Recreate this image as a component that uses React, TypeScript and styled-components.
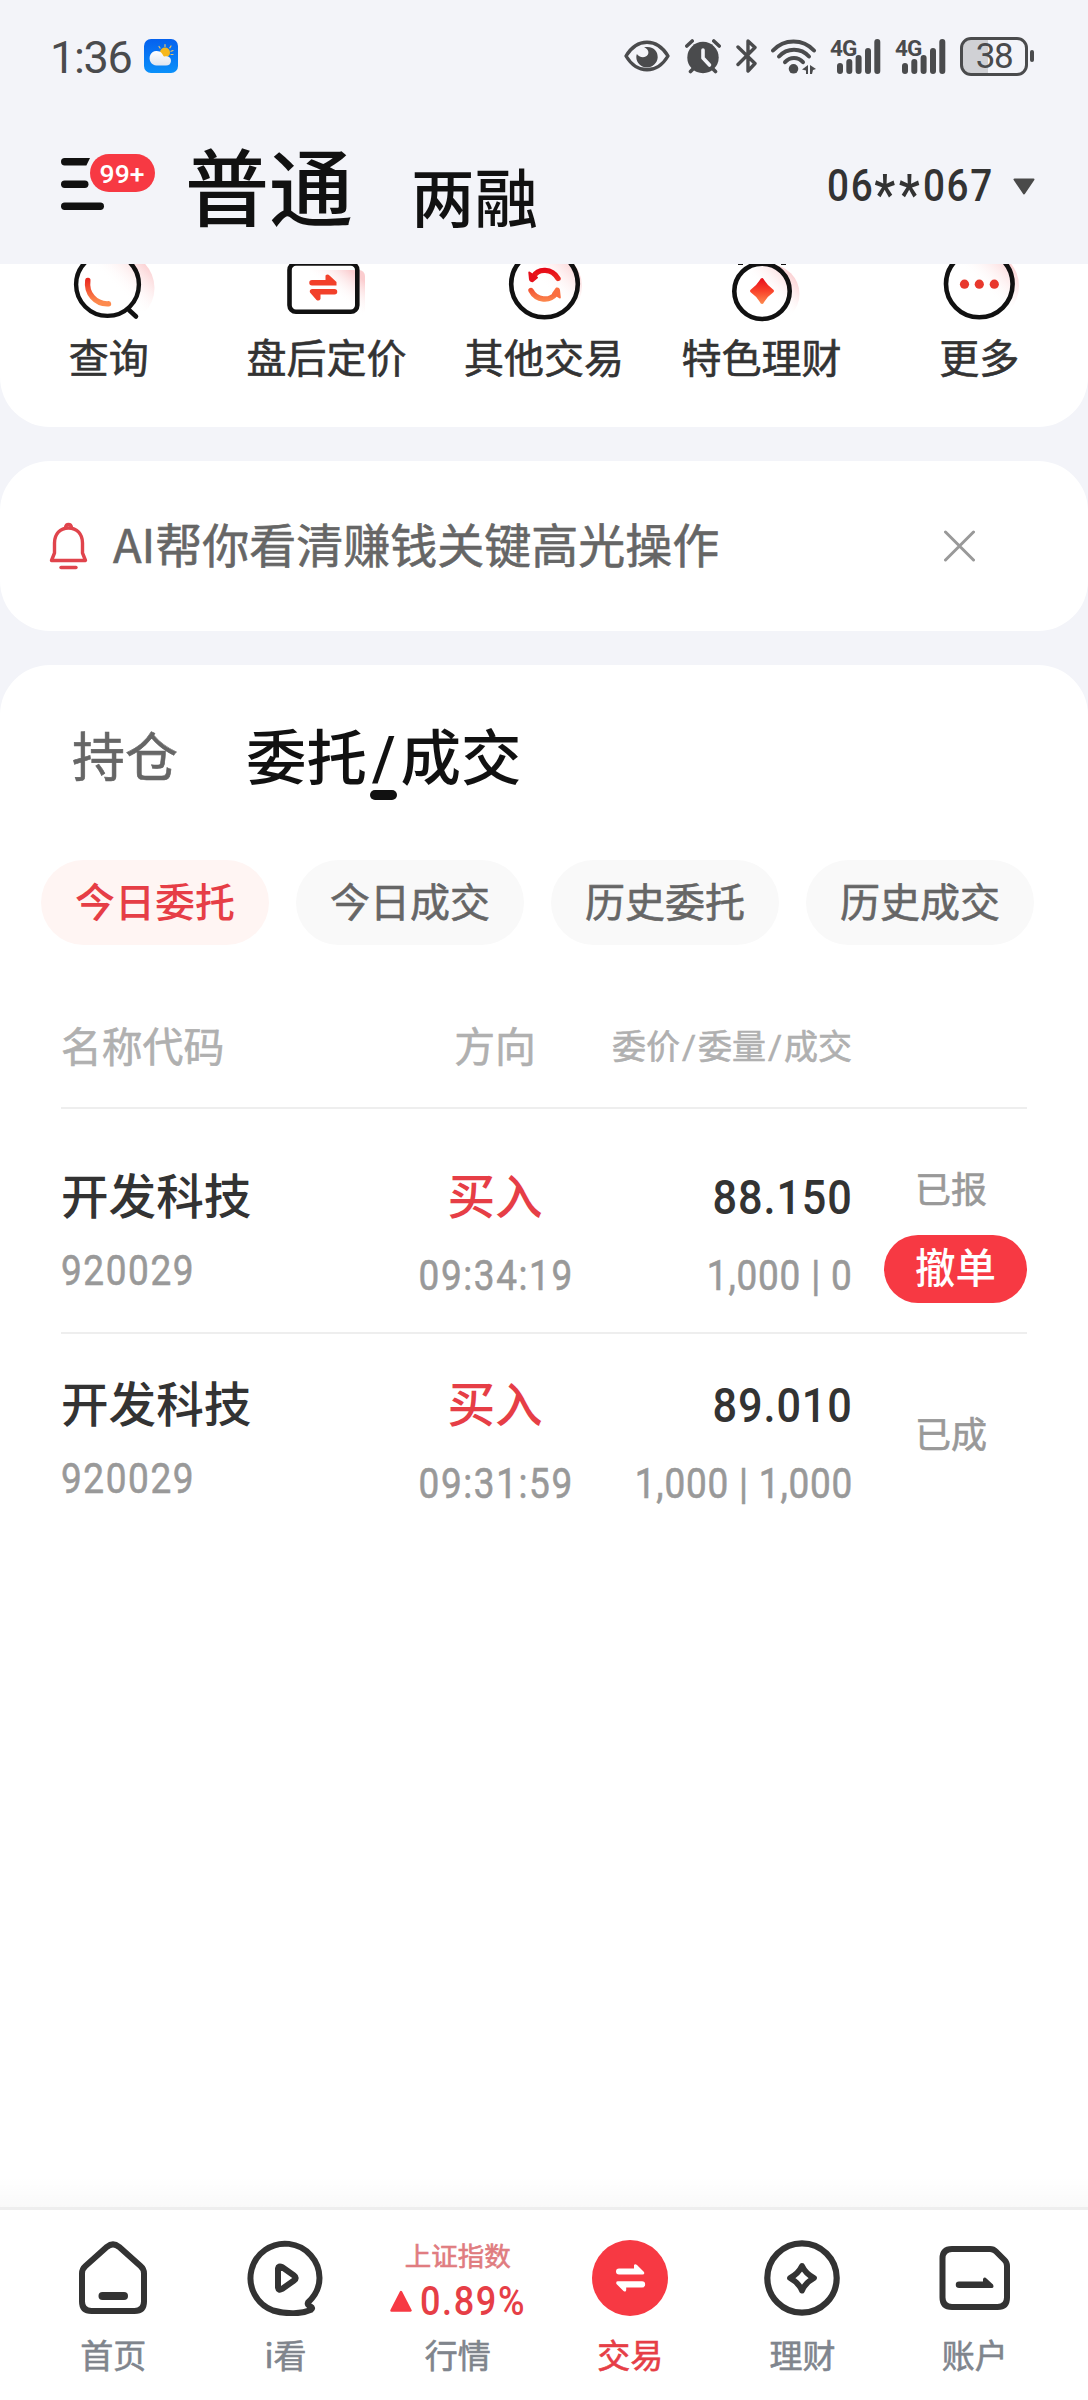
import React from 'react';
import styled, { createGlobalStyle, css } from 'styled-components';

const CJK = `"Noto Sans CJK SC", "Noto Sans", sans-serif`;
const NUM = `Roboto, "Noto Sans CJK SC", sans-serif`;
const RED = '#f73943';
const RED_TEXT = '#e63e46';

const GlobalStyle = createGlobalStyle`
  *, *::before, *::after { box-sizing: border-box; }
  body { margin: 0; background: #f3f4f9; font-family: ${CJK}; }
  svg { display: block; flex: none; }
`;

const Screen = styled.div`
  width: 1088px;
  height: 2400px;
  display: flex;
  flex-direction: column;
  background: #f3f4f9;
  overflow: hidden;
`;

/* slightly sturdier strokes for regular-weight text */
const sturdy = css`
  -webkit-text-stroke: 0.6px currentColor;
`;

/* condensed numerals */
const Condensed = styled.span<{ $origin?: string; $scale?: number; $space?: number }>`
  display: inline-block;
  transform: scaleX(${(p) => p.$scale ?? 0.88});
  transform-origin: ${(p) => p.$origin ?? 'left'} center;
  letter-spacing: ${(p) => p.$space ?? 1.8}px;
  margin-right: -${(p) => p.$space ?? 1.8}px;
`;

/* ---------- status bar ---------- */
const StatusBar = styled.div`
  height: 112px;
  padding: 0 54px 0 50px;
  display: flex;
  align-items: center;
  justify-content: space-between;
  color: #4a4b4d;
`;
const StatusLeft = styled.div`
  display: flex;
  align-items: center;
  gap: 13px;
`;
const Clock = styled.span`
  width: 81px;
  font: 400 45px/50px ${NUM};
  letter-spacing: -1.3px;
  white-space: nowrap;
  margin-top: 3px;
`;
const StatusIcons = styled.div`
  display: flex;
  align-items: center;
`;
const IconSlot = styled.div<{ $gap: number }>`
  margin-left: ${(p) => p.$gap}px;
`;
const Cell = styled.div`
  width: 51px;
  height: 35px;
  display: flex;
  align-items: flex-end;
`;
const CellTag = styled.span`
  font: 700 22.5px/18px ${NUM};
  letter-spacing: -1px;
  width: 25px;
  align-self: flex-start;
`;
const BarsSlot = styled.div`
  margin-left: -18px;
`;
const Battery = styled.div`
  width: 68px;
  height: 39px;
  border: 3px solid #4a4b4d;
  border-radius: 11px;
  display: flex;
  align-items: center;
  justify-content: center;
  background: linear-gradient(90deg, #d0d1d5 0 25px, transparent 25px);
  font: 400 35px/35px ${NUM};
  letter-spacing: -1.5px;
`;
const BatteryWrap = styled.div`
  display: flex;
  align-items: center;
  gap: 2px;
`;
const BatteryNub = styled.div`
  width: 4px;
  height: 12px;
  border-radius: 2px;
  background: #4a4b4d;
`;

/* ---------- header ---------- */
const Header = styled.header`
  height: 152px;
  padding: 0 53px 0 61px;
  display: flex;
  align-items: flex-start;
`;
const MenuButton = styled.div`
  position: relative;
  width: 94px;
  height: 60px;
  margin-top: 40px;
`;
const Badge = styled.span`
  position: absolute;
  left: 28.5px;
  top: 2px;
  width: 65px;
  height: 38px;
  border-radius: 19px;
  background: ${RED};
  color: #fff;
  font: 500 26.5px/39px ${NUM};
  text-align: center;
`;
const Account = styled.h1<{ $active?: boolean }>`
  margin: 0;
  color: #111;
  font-weight: 500;
  white-space: nowrap;
  ${(p) =>
    p.$active
      ? css`
          font-size: 84px;
          line-height: 90px;
          margin: 27px 0 0 30px;
        `
      : css`
          font-size: 63.5px;
          line-height: 70px;
          margin: 47px 0 0 58px;
        `}
`;
const AccountNo = styled.div`
  margin: 49px 0 0 auto;
  display: flex;
  align-items: center;
  gap: 21px;
  color: #333;
  font: 500 45px/50px ${NUM};
`;
const Stars = styled.span`
  font-size: 55px;
  line-height: 1px;
  vertical-align: -13px;
  letter-spacing: 4px;
`;

/* ---------- quick actions ---------- */
const Quick = styled.section`
  height: 163px;
  background: #fff;
  border-radius: 0 0 50px 50px;
  display: grid;
  grid-template-columns: repeat(5, 1fr);
  justify-items: center;
  align-items: start;
`;
const QuickItem = styled.div`
  display: flex;
  flex-direction: column;
  align-items: center;
  gap: 9px;
  color: #333;
  font: 400 40px/50px ${CJK};
  ${sturdy}
`;

/* ---------- notice ---------- */
const Notice = styled.section`
  height: 170px;
  margin-top: 34px;
  padding: 0 113px 0 49px;
  display: flex;
  align-items: center;
  background: #fff;
  border-radius: 50px;
`;
const NoticeText = styled.p`
  margin: -6px auto 0 25px;
  color: #666;
  font: 400 47px/60px ${CJK};
  ${sturdy}
`;

/* ---------- orders ---------- */
const Orders = styled.main`
  flex: 1;
  min-height: 0;
  margin-top: 34px;
  padding: 53px 54px 0 41px;
  background: #fff;
  border-radius: 50px 50px 0 0;
  display: flex;
  flex-direction: column;
`;
const Tabs = styled.nav`
  height: 82px;
  padding-left: 31px;
  display: flex;
  align-items: flex-start;
`;
const Tab = styled.div<{ $active?: boolean }>`
  display: flex;
  flex-direction: column;
  align-items: center;
  ${(p) =>
    p.$active
      ? css`
          margin-left: 68px;
          color: #111;
          font: 500 60.5px/72px ${CJK};
          &::after {
            content: '';
            width: 27px;
            height: 10px;
            border-radius: 5px;
            background: #111;
          }
        `
      : css`
          color: #666;
          font: 400 53px/72px ${CJK};
          ${sturdy}
        `}
`;
const Slash = styled.span<{ $x: number }>`
  margin: 0 ${(p) => p.$x}px;
  font-family: ${NUM};
  line-height: 1px;
`;
const Chips = styled.div`
  margin-top: 60px;
  display: grid;
  grid-template-columns: repeat(4, 228px);
  column-gap: 27px;
`;
const Chip = styled.div<{ $active?: boolean }>`
  height: 85px;
  border-radius: 43px;
  text-align: center;
  font: ${(p) => (p.$active ? 500 : 400)} 40px/80px ${CJK};
  color: ${(p) => (p.$active ? RED_TEXT : '#666')};
  background: ${(p) => (p.$active ? '#fff5f3' : '#f9f9f9')};
  ${(p) => !p.$active && sturdy}
`;
const Table = styled.div`
  margin: 62px 7px 0 20px;
`;
const rowGrid = css`
  display: grid;
  grid-template-columns: 341px 186px 264px 175px;
`;
const HeadRow = styled.div`
  ${rowGrid}
  height: 102px;
  border-bottom: 2px solid #eee;
  color: #b0b0b0;
  font: 400 40.8px/76px ${CJK};
  ${sturdy}
`;
const HeadCell = styled.div<{ $align?: string; $small?: boolean }>`
  text-align: ${(p) => p.$align ?? 'left'};
  white-space: nowrap;
  ${(p) => p.$small && css`font-size: 34px;`}
`;
const Row = styled.div<{ $first?: boolean }>`
  ${rowGrid}
  height: ${(p) => (p.$first ? 225 : 208)}px;
  padding-top: ${(p) => (p.$first ? 54 : 37)}px;
  border-bottom: ${(p) => (p.$first ? '2px solid #eee' : 'none')};
`;
const Col = styled.div<{ $align: string }>`
  display: flex;
  flex-direction: column;
  align-items: ${(p) => p.$align};
  white-space: nowrap;
`;
const Name = styled.div<{ $buy?: boolean }>`
  color: ${(p) => (p.$buy ? RED_TEXT : '#333')};
  font: 500 47.6px/62px ${CJK};
`;
const Sub = styled.div<{ $top: number }>`
  margin-top: ${(p) => p.$top}px;
  color: #999;
  font: 400 42px/50px ${NUM};
  ${sturdy}
`;
const Price = styled.div`
  color: #333;
  font: 500 48px/60px ${NUM};
  margin-top: 5px;
`;
const StatusCol = styled.div<{ $top: number }>`
  display: flex;
  flex-direction: column;
  align-items: flex-end;
  padding-top: ${(p) => p.$top}px;
`;
const Status = styled.div`
  color: #999;
  font: 400 36px/44px ${CJK};
  margin-right: 40px;
  ${sturdy}
`;
const CancelButton = styled.button`
  width: 143px;
  height: 68px;
  margin-top: 26px;
  padding: 1px 0 0;
  border: 0;
  border-radius: 34px;
  background: ${RED};
  color: #fff;
  font: 500 40.5px/60px ${CJK};
  display: flex;
  align-items: flex-start;
  justify-content: center;
`;

/* ---------- tab bar ---------- */
const TabShade = styled.div`
  height: 30px;
  flex: none;
  margin-top: -30px;
  background: linear-gradient(rgba(0, 0, 0, 0), rgba(0, 0, 0, 0.024));
`;
const TabBar = styled.footer`
  flex: none;
  height: 193px;
  padding: 30px 27px 0;
  border-top: 3px solid #eee;
  background: #fff;
  display: grid;
  grid-template-columns: repeat(6, 1fr);
`;
const TabItem = styled.div<{ $active?: boolean }>`
  display: flex;
  flex-direction: column;
  align-items: center;
  color: ${(p) => (p.$active ? RED_TEXT : '#80858d')};
  font: 400 33px/44px ${CJK};
  ${sturdy}
`;
const TabGlyph = styled.div`
  height: 76px;
  margin-bottom: 16px;
  display: flex;
  flex-direction: column;
  align-items: center;
`;
const IndexName = styled.div`
  color: #e07c80;
  font: 400 26.5px/26px ${CJK};
  margin-top: 2px;
`;
const IndexValue = styled.div`
  display: flex;
  align-items: center;
  gap: 8px;
  width: 136px;
  margin-top: 8px;
  color: ${RED_TEXT};
  font: 500 41px/50px ${NUM};
  -webkit-text-stroke: 0;
`;

const bar = '#4a4b4d';

const WeatherIcon = () => (
  <svg width="34" height="34" viewBox="0 0 34 34">
    <defs>
      <linearGradient id="sky" x1="0" y1="0" x2="0" y2="1">
        <stop offset="0" stopColor="#0561ee" />
        <stop offset="1" stopColor="#0a90fa" />
      </linearGradient>
      <linearGradient id="cloud" x1="0" y1="0" x2="0" y2="1">
        <stop offset="0" stopColor="#ffffff" />
        <stop offset="1" stopColor="#dfe5f0" />
      </linearGradient>
    </defs>
    <rect width="34" height="34" rx="7" fill="url(#sky)" />
    <g stroke="#e9c46a" strokeWidth="1.2" strokeLinecap="round">
      <path d="M21 5.5v2M15 7.5l1 1.5M27 7l-1.2 1.8M29 11.5l-2 .8M29 15.500h-2" />
    </g>
    <circle cx="21" cy="13.5" r="5" fill="#f6b81c" />
    <path d="M12.500 26.500A7 7.300 0 1 1 18.300 15Q19.500 17 20 17.500Q26.800 16.500 27 22Q26.500 26.500 22 26.500z" fill="url(#cloud)" />
  </svg>
);
const EyeIcon = () => (
  <svg width="46" height="32" viewBox="0 0 46 32">
    <path d="M2 16C8 6 15 2.200 23 2.200S38 6 44 16C38 26 31 29.800 23 29.800S8 26 2 16z" fill="none" stroke={bar} strokeWidth="3.400" strokeLinejoin="round" />
    <path d="M20 7.300C30 5.500 34 12 33.700 17.500 33.300 23 28.500 27.500 23 27.500S12.300 23 12.300 17c0-1 .2-2 .6-3 2 3.500 8.500 4.600 11 .6 1.600-2.800-.6-6.300-3.900-7.300z" fill={bar} />
  </svg>
);
const AlarmIcon = () => (
  <svg width="36" height="35" viewBox="0 0 36 35">
    <circle cx="18" cy="18.500" r="15.700" fill={bar} />
    <path d="M1.800 7L7.200 2M34.200 7L28.800 2M5.500 32.500l4-4M30.500 32.500l-4-4" stroke={bar} strokeWidth="3.600" strokeLinecap="round" />
    <path d="M18 11v8l6.500 7" fill="none" stroke="#f3f4f9" strokeWidth="3.600" strokeLinecap="round" strokeLinejoin="round" />
  </svg>
);
const BluetoothIcon = () => (
  <svg width="21" height="36" viewBox="0 0 21 36">
    <path d="M2 9l17 16.500-7 7.500V3l7 6.500L2 26.500" fill="none" stroke={bar} strokeWidth="3.400" strokeLinecap="round" strokeLinejoin="round" />
  </svg>
);
const WifiIcon = () => (
  <svg width="46" height="35" viewBox="0 0 46 35">
    <g fill="none" stroke={bar} strokeWidth="4" strokeLinecap="round">
      <path d="M2 11.500C13-.6 32-.6 43 11.500" />
      <path d="M8 17.500c8-9 22-9 30 0" />
      <path d="M14 23.200c5-5.500 13-5.500 18 0" />
    </g>
    <circle cx="22.500" cy="29.800" r="4.800" fill={bar} />
    <path d="M37 26v9h-2v-3.500l-4-1zM39 26l6 4-3 1-1 4h-2z" fill={bar} />
  </svg>
);
const Bars = () => (
  <svg width="44" height="35" viewBox="0 0 44 35">
    <g fill={bar}>
      <rect x="0" y="24" width="6" height="11" rx="3" />
      <rect x="9.300" y="20" width="6" height="15" rx="3" />
      <rect x="18.600" y="16" width="6" height="19" rx="3" />
      <rect x="28" y="9" width="6" height="26" rx="3" />
      <rect x="37.300" y="0" width="6" height="35" rx="3" />
    </g>
  </svg>
);
const Signal = () => (
  <Cell>
    <CellTag>4G</CellTag>
    <BarsSlot><Bars /></BarsSlot>
  </Cell>
);
const MenuIcon = () => (
  <svg width="94" height="60" viewBox="0 0 94 60">
    <g fill="#111">
      <path d="M3.700 6H29l-3.600 7.400H3.700a3.700 3.700 0 0 1 0-7.400z" />
      <rect x="0" y="28.600" width="27.500" height="7.400" rx="3.700" />
      <rect x="0" y="50.600" width="43" height="7.400" rx="3.700" />
    </g>
  </svg>
);
const CaretDown = () => (
  <svg width="22" height="17" viewBox="0 0 22 17">
    <path d="M1.500 1.500h19L11 15.500z" fill="#4a4a4a" stroke="#4a4a4a" strokeWidth="2" strokeLinejoin="round" />
  </svg>
);

const QuickDefs = () => (
  <svg width="0" height="0">
    <defs>
      <linearGradient id="flame" x1="0" y1="0" x2="0" y2="1">
        <stop offset="0" stopColor="#e60e1c" />
        <stop offset="0.500" stopColor="#f9422a" />
        <stop offset="1" stopColor="#fd8a4e" />
      </linearGradient>
      <linearGradient id="flameV" gradientUnits="userSpaceOnUse" x1="50" y1="3" x2="50" y2="38">
        <stop offset="0" stopColor="#e60014" />
        <stop offset="0.350" stopColor="#ea2a20" />
        <stop offset="1" stopColor="#fd8a4e" />
      </linearGradient>
      <linearGradient id="blush" x1="1" y1="0.250" x2="0.600" y2="0.650">
        <stop offset="0" stopColor="#fbcdcf" />
        <stop offset="1" stopColor="#fff" stopOpacity="0" />
      </linearGradient>
    </defs>
  </svg>
);
const Glyph: React.FC<{ children: React.ReactNode }> = ({ children }) => (
  <svg width="100" height="58" viewBox="0 0 100 58">{children}</svg>
);
const QueryIcon = () => (
  <Glyph>
    <circle cx="60" cy="24" r="35.500" fill="url(#blush)" />
    <circle cx="48.500" cy="20.500" r="31.400" fill="none" stroke="#111" strokeWidth="4.400" />
    <path d="M70 46l7 6.500" stroke="#111" strokeWidth="4.600" strokeLinecap="round" />
    <path d="M28.800 16.500C27 29 36 40.500 49.500 39.800" fill="none" stroke="url(#flameV)" strokeWidth="5.400" strokeLinecap="round" />
  </Glyph>
);
const FixedPriceIcon = () => (
  <Glyph>
    <rect x="30" y="6" width="59" height="46" rx="6" fill="url(#blush)" />
    <rect x="13.500" y="-.5" width="67.800" height="48.300" rx="6.500" fill="none" stroke="#111" strokeWidth="4.600" />
    <path d="M36 16h13.500v-4.500q2-2 4 0l7 6.500v3.500H36a2.700 2.700 0 0 1 0-5.500zM58.500 25H36q-3 .5-2 3.500l6.500 7.500q2.500 1.500 4-1v-4.500h14a2.700 2.700 0 0 0 0-5.500z" fill="#f2402a" />
  </Glyph>
);
const OtherTradeIcon = () => (
  <Glyph>
    <circle cx="54" cy="22" r="34" fill="url(#blush)" />
    <circle cx="50.500" cy="20" r="33.300" fill="none" stroke="#111" strokeWidth="4.600" />
    <g fill="none" stroke="url(#flameV)" strokeWidth="5.400" strokeLinecap="round">
      <path d="M39.500 12.500C44 4 58 4 64 14.500" />
      <path d="M37 26.500C42.500 37 56 37.500 62 29.500" />
    </g>
    <path d="M35.300 8.500L43 13.500 38.500 17.300q-2 0-2.500-2z" fill="#e6101c" stroke="#e6101c" strokeWidth="2" strokeLinejoin="round" />
    <path d="M65.800 33.500L59 29.500 62.500 24.500q2-.5 2.500 1.500z" fill="#fb6f40" stroke="#fb6f40" strokeWidth="2" strokeLinejoin="round" />
  </Glyph>
);
const WealthIcon = () => (
  <Glyph>
    <path d="M26 0h5M69 0h5" stroke="#111" strokeWidth="2" />
    <circle cx="58" cy="30" r="29.500" fill="url(#blush)" />
    <circle cx="50" cy="27.300" r="27.700" fill="none" stroke="#111" strokeWidth="4.600" />
    <path d="M50 14q1.500 0 2.500 2.500 3.500 5.500 8 8.500 3 2 0 4-4.500 3-8 8.500Q50 42.500 47.500 37.500 44 32 39.500 29q-3-2 0-4 4.500-3 8-8.500Q48.500 14 50 14z" fill="url(#flame)" />
  </Glyph>
);
const MoreIcon = () => (
  <Glyph>
    <circle cx="55" cy="22" r="35" fill="url(#blush)" />
    <circle cx="50.300" cy="20" r="33.300" fill="none" stroke="#111" strokeWidth="4.600" />
    <g fill="#e8382d">
      <circle cx="35.500" cy="20.200" r="4.600" />
      <circle cx="50.300" cy="20.200" r="4.600" />
      <circle cx="65.300" cy="20.200" r="4.600" />
    </g>
  </Glyph>
);

const BellIcon = () => (
  <svg width="39" height="48" viewBox="0 0 39 48">
    <g fill="none" stroke="#e0444c" strokeWidth="3.400" strokeLinecap="round" strokeLinejoin="round">
      <path d="M5.500 31V21C5.500 12 11 6 19.500 6S33.500 12 33.500 21V31L36.500 38.500H2.500z" />
      <path d="M16.500 5.500Q17 2.500 19.500 2.500T22.500 5.500" />
      <path d="M12 45.500h15" />
    </g>
  </svg>
);
const CloseIcon = () => (
  <svg width="31" height="32" viewBox="0 0 31 32">
    <path d="M1.500 2l28 28M29.500 2l-28 28" stroke="#999" strokeWidth="3" strokeLinecap="round" />
  </svg>
);

const ink = '#333';
const HomeIcon = () => (
  <svg width="76" height="76" viewBox="0 0 76 76">
    <path d="M7 33.500Q7 29 10.500 26L32 6.800Q38 2 44 6.800L65.500 26Q69 29 69 33.500V61.500Q69 71 59.500 71H16.500Q7 71 7 61.500z" fill="none" stroke={ink} strokeWidth="6" strokeLinejoin="round" />
    <path d="M27.500 56h21.500" stroke={ink} strokeWidth="8" strokeLinecap="round" />
  </svg>
);
const WatchIcon = () => (
  <svg width="76" height="76" viewBox="0 0 76 76">
    <path d="M61 62.500C68 56 72.500 48 72.500 38A34.500 34.500 0 1 0 26 70.500C40 74.500 55 74 64 69.800Q66.500 68 63.500 66.500Q60 65 61 62.500z" fill="none" stroke={ink} strokeWidth="6" strokeLinejoin="round" />
    <path d="M31 28.500Q31.500 25.500 35 27L47 35.500Q50.500 38 47 40.500L35 49Q31.500 51 31 47.500z" fill="none" stroke={ink} strokeWidth="6" strokeLinejoin="round" />
  </svg>
);
const TradeIcon = () => (
  <svg width="76" height="76" viewBox="0 0 76 76">
    <circle cx="38" cy="38" r="38" fill={RED} />
    <path d="M27 28.500H42V25Q43 23.500 45 25L52 32Q53 34.500 50.500 34.500H27A3 3 0 0 1 27 28.500zM50 41.200H26Q23.500 41.200 24.500 44L31.500 51Q34 52.500 34.200 50V47.500H50A3 3 0 0 0 50 41.200z" fill="#fff" />
  </svg>
);
const FinanceIcon = () => (
  <svg width="76" height="76" viewBox="0 0 76 76">
    <circle cx="38" cy="38" r="34.700" fill="none" stroke={ink} strokeWidth="6.200" />
    <path d="M38 26Q41.500 33.500 50 38Q41.500 42.500 38 50.500Q34.500 42.500 26 38Q34.500 33.500 38 26z" fill="none" stroke={ink} strokeWidth="5.800" strokeLinejoin="round" />
  </svg>
);
const AccountIcon = () => (
  <svg width="76" height="76" viewBox="0 0 76 76">
    <path d="M15 9H53Q56.500 9 59 11.500L67.500 20Q70 22.500 70 26V57.500Q70 67 60.500 67H15Q5.500 67 5.500 57.500V18.500Q5.500 9 15 9z" fill="none" stroke={ink} strokeWidth="6" strokeLinejoin="round" />
    <path d="M22 41.500H46V39Q47.500 36.500 49.500 38.500L56 44.500Q57.500 48 54.500 48H22A3.200 3.200 0 0 1 22 41.500z" fill={ink} />
  </svg>
);
const UpTriangle = () => (
  <svg width="22" height="22" viewBox="0 0 22 22">
    <path d="M11 2L20.500 20.500h-19z" fill={RED} stroke={RED} strokeWidth="2.500" strokeLinejoin="round" />
  </svg>
);

const quick = [
  { label: '查询', icon: <QueryIcon /> },
  { label: '盘后定价', icon: <FixedPriceIcon /> },
  { label: '其他交易', icon: <OtherTradeIcon /> },
  { label: '特色理财', icon: <WealthIcon /> },
  { label: '更多', icon: <MoreIcon /> },
];
const chips = ['今日委托', '今日成交', '历史委托', '历史成交'];
const orders = [
  { time: '09:34:19', price: '88.150', qty: '1,000 | 0', status: '已报', open: true },
  { time: '09:31:59', price: '89.010', qty: '1,000 | 1,000', status: '已成', open: false },
];

export default function App() {
  return (
    <Screen>
      <GlobalStyle />
      <QuickDefs />
      <StatusBar>
        <StatusLeft>
          <Clock>1:36</Clock>
          <WeatherIcon />
        </StatusLeft>
        <StatusIcons>
          <EyeIcon />
          <IconSlot $gap={15}><AlarmIcon /></IconSlot>
          <IconSlot $gap={15}><BluetoothIcon /></IconSlot>
          <IconSlot $gap={14}><WifiIcon /></IconSlot>
          <IconSlot $gap={13}><Signal /></IconSlot>
          <IconSlot $gap={14}><Signal /></IconSlot>
          <IconSlot $gap={14}>
            <BatteryWrap>
              <Battery>38</Battery>
              <BatteryNub />
            </BatteryWrap>
          </IconSlot>
        </StatusIcons>
      </StatusBar>

      <Header>
        <MenuButton>
          <MenuIcon />
          <Badge>99+</Badge>
        </MenuButton>
        <Account $active>普通</Account>
        <Account>两融</Account>
        <AccountNo>
          <Condensed $origin="right" $scale={0.86} $space={1.8}>
            06<Stars>**</Stars>067
          </Condensed>
          <CaretDown />
        </AccountNo>
      </Header>

      <Quick>
        {quick.map((q) => (
          <QuickItem key={q.label}>
            {q.icon}
            {q.label}
          </QuickItem>
        ))}
      </Quick>

      <Notice>
        <BellIcon />
        <NoticeText>AI帮你看清赚钱关键高光操作</NoticeText>
        <CloseIcon />
      </Notice>

      <Orders>
        <Tabs>
          <Tab>持仓</Tab>
          <Tab $active>
            <span>委托<Slash $x={5}>/</Slash>成交</span>
          </Tab>
        </Tabs>
        <Chips>
          {chips.map((c, i) => (
            <Chip key={c} $active={i === 0}>{c}</Chip>
          ))}
        </Chips>
        <Table>
          <HeadRow>
            <HeadCell>名称代码</HeadCell>
            <HeadCell $align="center">方向</HeadCell>
            <HeadCell $align="right" $small>
              委价<Slash $x={2}>/</Slash>委量<Slash $x={2}>/</Slash>成交
            </HeadCell>
          </HeadRow>
          {orders.map((o) => (
            <Row key={o.time} $first={o.open}>
              <Col $align="flex-start">
                <Name>开发科技</Name>
                <Sub $top={21}><Condensed>920029</Condensed></Sub>
              </Col>
              <Col $align="center">
                <Name $buy>买入</Name>
                <Sub $top={26}><Condensed $origin="center">{o.time}</Condensed></Sub>
              </Col>
              <Col $align="flex-end">
                <Price><Condensed $origin="right" $scale={0.9} $space={1}>{o.price}</Condensed></Price>
                <Sub $top={23}><Condensed $origin="right" $space={0.9}>{o.qty}</Condensed></Sub>
              </Col>
              <StatusCol $top={o.open ? 2 : 39}>
                <Status>{o.status}</Status>
                {o.open && <CancelButton>撤单</CancelButton>}
              </StatusCol>
            </Row>
          ))}
        </Table>
      </Orders>

      <TabShade />
      <TabBar>
        <TabItem><TabGlyph><HomeIcon /></TabGlyph>首页</TabItem>
        <TabItem><TabGlyph><WatchIcon /></TabGlyph>i看</TabItem>
        <TabItem>
          <TabGlyph>
            <IndexName>上证指数</IndexName>
            <IndexValue>
              <UpTriangle />
              <Condensed>0.89%</Condensed>
            </IndexValue>
          </TabGlyph>
          行情
        </TabItem>
        <TabItem $active><TabGlyph><TradeIcon /></TabGlyph>交易</TabItem>
        <TabItem><TabGlyph><FinanceIcon /></TabGlyph>理财</TabItem>
        <TabItem><TabGlyph><AccountIcon /></TabGlyph>账户</TabItem>
      </TabBar>
    </Screen>
  );
}
